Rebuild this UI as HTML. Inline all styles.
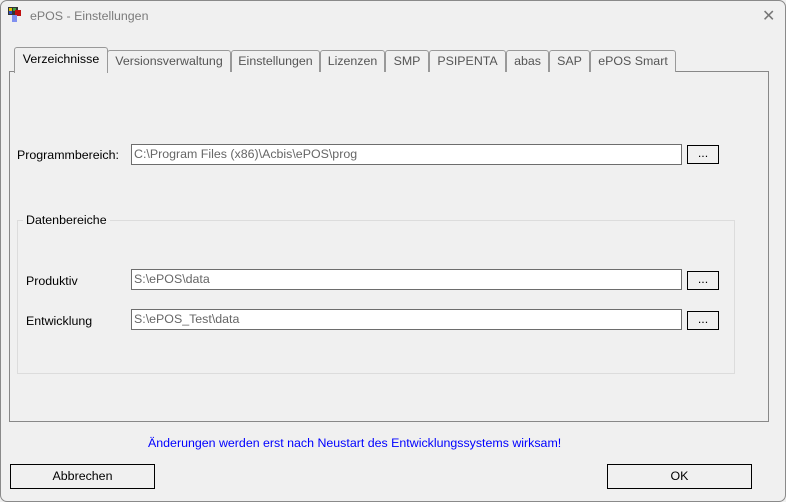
<!DOCTYPE html>
<html><head><meta charset="utf-8"><style>
*{margin:0;padding:0;box-sizing:border-box}
body{width:786px;height:502px;background:#f0f0f0;font-family:"Liberation Sans",sans-serif;font-size:12.4px;color:#000;position:relative;overflow:hidden}
.frame{position:absolute;left:0;top:0;width:786px;height:502px;border:1px solid #8a8a8a;border-radius:7px;pointer-events:none;z-index:5}
.title{position:absolute;left:30px;top:9px;font-size:12.4px;color:#7a7a7a}
.x{position:absolute;left:762px;top:6px;font-size:16px;color:#777}
.a{position:absolute}
.tab{position:absolute;top:50px;height:22px;border:1px solid #999;border-bottom:none;border-radius:3px 3px 0 0;color:#555;text-align:center;line-height:20px;background:#f0f0f0}
.panel{position:absolute;left:9px;top:71px;width:760px;height:351px;border:1px solid #888}
.inp{position:absolute;height:21px;border:1px solid #6d6d6d;background:#fff;color:#666;line-height:18px;padding-left:2px}
.btn{position:absolute;border:1px solid #000;background:#f0f0f0;text-align:center}
.lbl{position:absolute}
</style></head><body>
<div class="frame"></div>
<svg class="a" style="left:8px;top:7px" width="17" height="17"><rect x="0" y="0" width="10" height="8" fill="#333"/><rect x="1" y="1" width="3" height="3" fill="#e0c000"/><rect x="5" y="1" width="3" height="3" fill="#40a040"/><rect x="1" y="4" width="3" height="3" fill="#3050c0"/><rect x="7" y="3" width="6" height="6" fill="#c01010"/><rect x="4" y="8" width="5" height="7" fill="#8090f0"/></svg>
<div class="title">ePOS - Einstellungen</div>
<div class="x">✕</div>
<div class="panel"></div>
<div class="tab" style="left:107px;width:124px">Versionsverwaltung</div>
<div class="tab" style="left:231px;width:89px">Einstellungen</div>
<div class="tab" style="left:320px;width:65px">Lizenzen</div>
<div class="tab" style="left:385px;width:44px">SMP</div>
<div class="tab" style="left:429px;width:77px">PSIPENTA</div>
<div class="tab" style="left:506px;width:43px">abas</div>
<div class="tab" style="left:549px;width:41px">SAP</div>
<div class="tab" style="left:590px;width:86px">ePOS Smart</div>
<div class="tab" style="left:14px;top:47px;width:94px;height:26px;color:#000;line-height:23px;z-index:2">Verzeichnisse</div>
<div class="lbl" style="left:17px;top:148px">Programmbereich:</div>
<div class="inp" style="left:131px;top:144px;width:551px">C:\Program Files (x86)\Acbis\ePOS\prog</div>
<div class="btn" style="left:687px;top:145px;width:32px;height:19px;line-height:14px">...</div>
<div class="a" style="left:17px;top:220px;width:718px;height:154px;border:1px solid #dcdcdc"></div>
<div class="lbl" style="left:23px;top:213px;background:#f0f0f0;padding:0 3px">Datenbereiche</div>
<div class="lbl" style="left:26px;top:274px">Produktiv</div>
<div class="inp" style="left:131px;top:269px;width:551px">S:\ePOS\data</div>
<div class="btn" style="left:687px;top:271px;width:32px;height:19px;line-height:14px">...</div>
<div class="lbl" style="left:26px;top:314px">Entwicklung</div>
<div class="inp" style="left:131px;top:309px;width:551px">S:\ePOS_Test\data</div>
<div class="btn" style="left:687px;top:311px;width:32px;height:19px;line-height:14px">...</div>
<div class="lbl" style="left:148px;top:436px;color:#0000ff">Änderungen werden erst nach Neustart des Entwicklungssystems wirksam!</div>
<div class="btn" style="left:10px;top:464px;width:145px;height:25px;line-height:23px">Abbrechen</div>
<div class="btn" style="left:607px;top:464px;width:145px;height:25px;line-height:23px">OK</div>
</body></html>
